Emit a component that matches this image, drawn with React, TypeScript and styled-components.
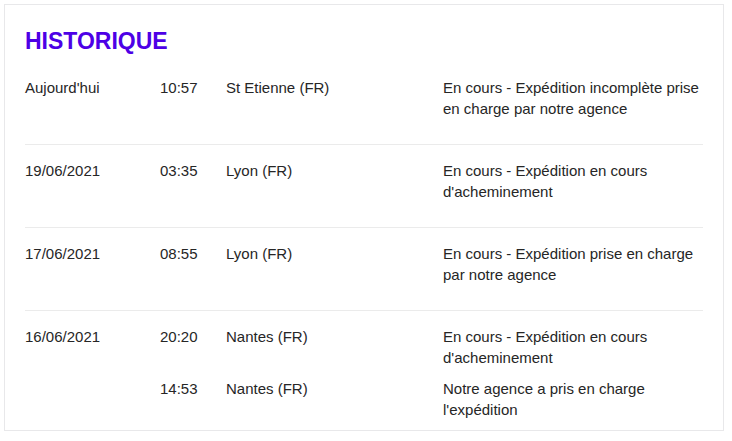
import React from "react";
import styled, { createGlobalStyle } from "styled-components";

const Global = createGlobalStyle`
  * { box-sizing: border-box; }
  body {
    margin: 0;
    background: #ffffff;
    font-family: "Liberation Sans", Arial, sans-serif;
  }
`;

const Card = styled.section`
  width: 720px;
  margin: 4px;
  border: 1px solid #e8e8ea;
  background: #fff;
  padding: 24px 20px 0 20px;
`;

const Title = styled.h2`
  margin: 0 0 8px 0;
  font-size: 23px;
  line-height: 25px;
  font-weight: 700;
  color: #4d00e6;
`;

const Row = styled.div`
  display: grid;
  grid-template-columns: 135px 1fr;
  padding: 15px 0 15px 0;
  border-bottom: 1px solid #ebebeb;
  &:last-child {
    border-bottom: none;
    padding-bottom: 0;
  }
`;

const Cell = styled.div`
  font-size: 15px;
  line-height: 21px;
  color: #262626;
`;

const Entries = styled.div`
  display: flex;
  flex-direction: column;
`;

const Entry = styled.div`
  display: grid;
  grid-template-columns: 66px 217px 1fr;
  margin-bottom: 10px;
`;

type Ev = { time: string; place: string; text: string };
type Day = { date: string; events: Ev[] };

const data: Day[] = [
  {
    date: "Aujourd'hui",
    events: [
      {
        time: "10:57",
        place: "St Etienne (FR)",
        text: "En cours - Expédition incomplète prise en charge par notre agence",
      },
    ],
  },
  {
    date: "19/06/2021",
    events: [
      {
        time: "03:35",
        place: "Lyon (FR)",
        text: "En cours - Expédition en cours d'acheminement",
      },
    ],
  },
  {
    date: "17/06/2021",
    events: [
      {
        time: "08:55",
        place: "Lyon (FR)",
        text: "En cours - Expédition prise en charge par notre agence",
      },
    ],
  },
  {
    date: "16/06/2021",
    events: [
      {
        time: "20:20",
        place: "Nantes (FR)",
        text: "En cours - Expédition en cours d'acheminement",
      },
      {
        time: "14:53",
        place: "Nantes (FR)",
        text: "Notre agence a pris en charge l'expédition",
      },
    ],
  },
];

export default function App() {
  return (
    <>
      <Global />
      <Card>
        <Title>HISTORIQUE</Title>
        {data.map((d) => (
          <Row key={d.date}>
            <Cell>{d.date}</Cell>
            <Entries>
              {d.events.map((e) => (
                <Entry key={e.time}>
                  <Cell>{e.time}</Cell>
                  <Cell>{e.place}</Cell>
                  <Cell>{e.text}</Cell>
                </Entry>
              ))}
            </Entries>
          </Row>
        ))}
      </Card>
    </>
  );
}
